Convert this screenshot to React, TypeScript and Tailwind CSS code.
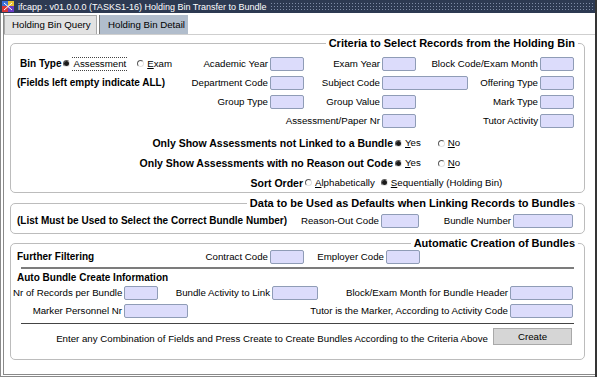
import React from "react";

const Input = ({ w }: { w: string }) => (
  <div className={`h-[14px] ${w} shrink-0 rounded-[2px] border border-[#8f9cb6] bg-[#dcdcfb]`} />
);

const Radio = ({ on }: { on?: boolean }) => (
  <span className="relative inline-block h-[7px] w-[7px] shrink-0 rounded-full border border-b-[#e2e2e2] border-l-[#5a5a5a] border-r-[#e2e2e2] border-t-[#5a5a5a] bg-white">
    {on && <span className="absolute left-[0px] top-[0px] h-[5px] w-[5px] rounded-full bg-[#1a1a1a]" />}
  </span>
);

const Lbl = ({ w, children }: { w: string; children?: React.ReactNode }) => (
  <span className={`${w} shrink-0 whitespace-nowrap pr-[2px] text-right`}>{children}</span>
);

const Panel = ({ title, className, children }: { title: string; className: string; children: React.ReactNode }) => (
  <div className={`relative ml-[6px] w-[575px] rounded-[5px] border border-[#bcbcbc] ${className}`}>
    <span className="absolute -top-[8px] right-[6px] bg-white px-[3px] text-[11px] font-bold leading-[14px]">
      {title}
    </span>
    {children}
  </div>
);

const Opt = ({ on, children }: { on?: boolean; children: React.ReactNode }) => (
  <span className="flex items-center gap-[3px]">
    <Radio on={on} />
    <span>{children}</span>
  </span>
);

export default function App() {
  return (
    <div className="h-[377px] w-[600px] bg-white font-['Liberation_Sans',Arial,sans-serif] text-[9.7px] leading-[12px] text-black">
      <div className="flex h-[377px] w-[597px] flex-col border-r-2 border-[#353535]">
        {/* title bar */}
        <div className="flex h-[13px] items-center bg-[#2d3a52] pl-[2px] text-[9px] text-white">
          <svg width="12" height="11" viewBox="0 0 12 11" className="shrink-0">
            <rect x="0" y="0" width="6" height="5" fill="#3b6fd8" />
            <rect x="6" y="0" width="6" height="5" fill="#e8c030" />
            <rect x="0" y="5" width="6" height="6" fill="#d83838" />
            <rect x="6" y="5" width="6" height="6" fill="#6a3cc8" />
            <path d="M2 2 L10 9 M10 2 L2 9" stroke="#ffffff" strokeWidth="1" />
          </svg>
          <span className="ml-[4px] whitespace-nowrap">ifcapp : v01.0.0.0 (TASKS1-16) Holding Bin Transfer to Bundle</span>
          <div className="ml-[4px] h-[9px] flex-1 bg-[radial-gradient(circle,#7f8ca6_0.7px,transparent_0.9px)] bg-[length:3px_3px]" />
        </div>

        <div className="flex flex-1 flex-col border-b-[3px] border-l-[4px] border-double border-[#8a8a8a]">
          {/* tabs */}
          <div className="flex h-[21px] items-end">
            <div className="flex h-[19px] w-[93px] items-center border border-b-0 border-[#a8a8a8] bg-[#e2e2e2] pl-[7px]">
              Holding Bin Query
            </div>
            <div className="ml-[2px] flex h-[19px] w-[89px] items-center border-l border-[#7a7a7a] bg-[#b1bdcc] pl-[8px]">
              Holding Bin Detail
            </div>
          </div>

          <div className="flex flex-1 flex-col border-t border-[#cfcfcf] pt-[8px]">
            {/* criteria */}
            <Panel title="Criteria to Select Records from the Holding Bin" className="pl-[6px] pt-[10px]">
              <div className="flex h-[19px] items-center">
                <div className="flex w-[253px] shrink-0 items-center">
                  <span className="ml-[3px] text-[10px] font-bold">Bin Type</span>
                  <span className="ml-[2px] flex items-center gap-[2px]">
                    <Radio on />
                    <span className="border-y border-dotted border-[#444] px-[1px]">Assessment</span>
                  </span>
                  <span className="ml-[10px]">
                    <Opt>
                      <span className="underline">E</span>xam
                    </Opt>
                  </span>
                  <span className="ml-auto pr-[2px]">Academic Year</span>
                </div>
                <Input w="w-[34px]" />
                <Lbl w="w-[78px]">Exam Year</Lbl>
                <Input w="w-[34px]" />
                <Lbl w="w-[124px]">Block Code/Exam Month</Lbl>
                <Input w="w-[34px]" />
              </div>
              <div className="flex h-[19px] items-center">
                <div className="flex w-[253px] shrink-0 items-center">
                  <span className="text-[10px] font-bold">(Fields left empty indicate ALL)</span>
                  <span className="ml-auto pr-[2px]">Department Code</span>
                </div>
                <Input w="w-[34px]" />
                <Lbl w="w-[78px]">Subject Code</Lbl>
                <Input w="w-[86px]" />
                <Lbl w="w-[72px]">Offering Type</Lbl>
                <Input w="w-[34px]" />
              </div>
              <div className="flex h-[19px] items-center">
                <Lbl w="w-[253px]">Group Type</Lbl>
                <Input w="w-[34px]" />
                <Lbl w="w-[78px]">Group Value</Lbl>
                <Input w="w-[34px]" />
                <Lbl w="w-[124px]">Mark Type</Lbl>
                <Input w="w-[34px]" />
              </div>
              <div className="flex h-[19px] items-center">
                <Lbl w="w-[365px]">Assessment/Paper Nr</Lbl>
                <Input w="w-[34px]" />
                <Lbl w="w-[124px]">Tutor Activity</Lbl>
                <Input w="w-[34px]" />
              </div>
              <div className="mt-[3px] flex h-[20px] items-center">
                <span className="w-[378px] shrink-0 pr-[2px] text-right text-[10.5px] font-bold">
                  Only Show Assessments not Linked to a Bundle
                </span>
                <Opt on>
                  <span className="underline">Y</span>es
                </Opt>
                <span className="ml-[17px]">
                  <Opt>
                    <span className="underline">N</span>o
                  </Opt>
                </span>
              </div>
              <div className="flex h-[20px] items-center">
                <span className="w-[378px] shrink-0 pr-[2px] text-right text-[10.5px] font-bold">
                  Only Show Assessments with no Reason out Code
                </span>
                <Opt on>
                  <span className="underline">Y</span>es
                </Opt>
                <span className="ml-[17px]">
                  <Opt>
                    <span className="underline">N</span>o
                  </Opt>
                </span>
              </div>
              <div className="flex h-[19px] items-center">
                <span className="w-[288px] shrink-0 pr-[2px] text-right text-[10.5px] font-bold">Sort Order</span>
                <Opt>
                  <span className="underline">A</span>lphabetically
                </Opt>
                <span className="ml-[6px]">
                  <Opt on>
                    <span className="underline">S</span>equentially (Holding Bin)
                  </Opt>
                </span>
              </div>
            </Panel>

            {/* defaults */}
            <Panel
              title="Data to be Used as Defaults when Linking Records to Bundles"
              className="mt-[10px] pb-[4px] pl-[6px] pt-[9px]"
            >
              <div className="flex h-[16px] items-center">
                <div className="flex w-[364px] shrink-0 items-center">
                  <span className="text-[10px] font-bold">(List Must be Used to Select the Correct Bundle Number)</span>
                  <span className="ml-auto pr-[2px]">Reason-Out Code</span>
                </div>
                <Input w="w-[38px]" />
                <Lbl w="w-[94px]">Bundle Number</Lbl>
                <Input w="w-[60px]" />
              </div>
            </Panel>

            {/* automatic creation */}
            <Panel title="Automatic Creation of Bundles" className="mt-[9px] pb-[14px] pl-[6px] pt-[5px]">
              <div className="flex h-[16px] items-center">
                <div className="flex w-[253px] shrink-0 items-center">
                  <span className="text-[10px] font-bold">Further Filtering</span>
                  <span className="ml-auto pr-[2px]">Contract Code</span>
                </div>
                <Input w="w-[34px]" />
                <Lbl w="w-[82px]">Employer Code</Lbl>
                <Input w="w-[34px]" />
              </div>
              <div className="ml-[4px] mt-[2px] w-[553px] border-t-2 border-[#7c7c7c]" />
              <div className="mt-[2px] flex h-[13px] items-center text-[10px] font-bold">Auto Bundle Create Information</div>
              <div className="-ml-[4px] flex h-[18px] items-center">
                <Lbl w="w-[111px]">Nr of Records per Bundle</Lbl>
                <Input w="w-[34px]" />
                <Lbl w="w-[114px]">Bundle Activity to Link</Lbl>
                <Input w="w-[46px]" />
                <Lbl w="w-[192px]">Block/Exam Month for Bundle Header</Lbl>
                <Input w="w-[63px]" />
              </div>
              <div className="-ml-[4px] flex h-[18px] items-center">
                <Lbl w="w-[111px]">Marker Personnel Nr</Lbl>
                <Input w="w-[64px]" />
                <Lbl w="w-[322px]">Tutor is the Marker, According to Activity Code</Lbl>
                <Input w="w-[63px]" />
              </div>
              <div className="ml-[4px] mt-[3px] w-[553px] border-t border-[#444]" />
              <div className="mt-[4px] flex h-[17px] items-center">
                <span className="w-[476px] shrink-0 pr-[5px] pt-[4px] text-right">
                  Enter any Combination of Fields and Press Create to Create Bundles According to the Criteria Above
                </span>
                <div className="flex h-[17px] w-[79px] items-center justify-center border border-[#a9a9a9] bg-[#d6d6d6]">
                  Create
                </div>
              </div>
            </Panel>
          </div>
        </div>
      </div>
    </div>
  );
}
